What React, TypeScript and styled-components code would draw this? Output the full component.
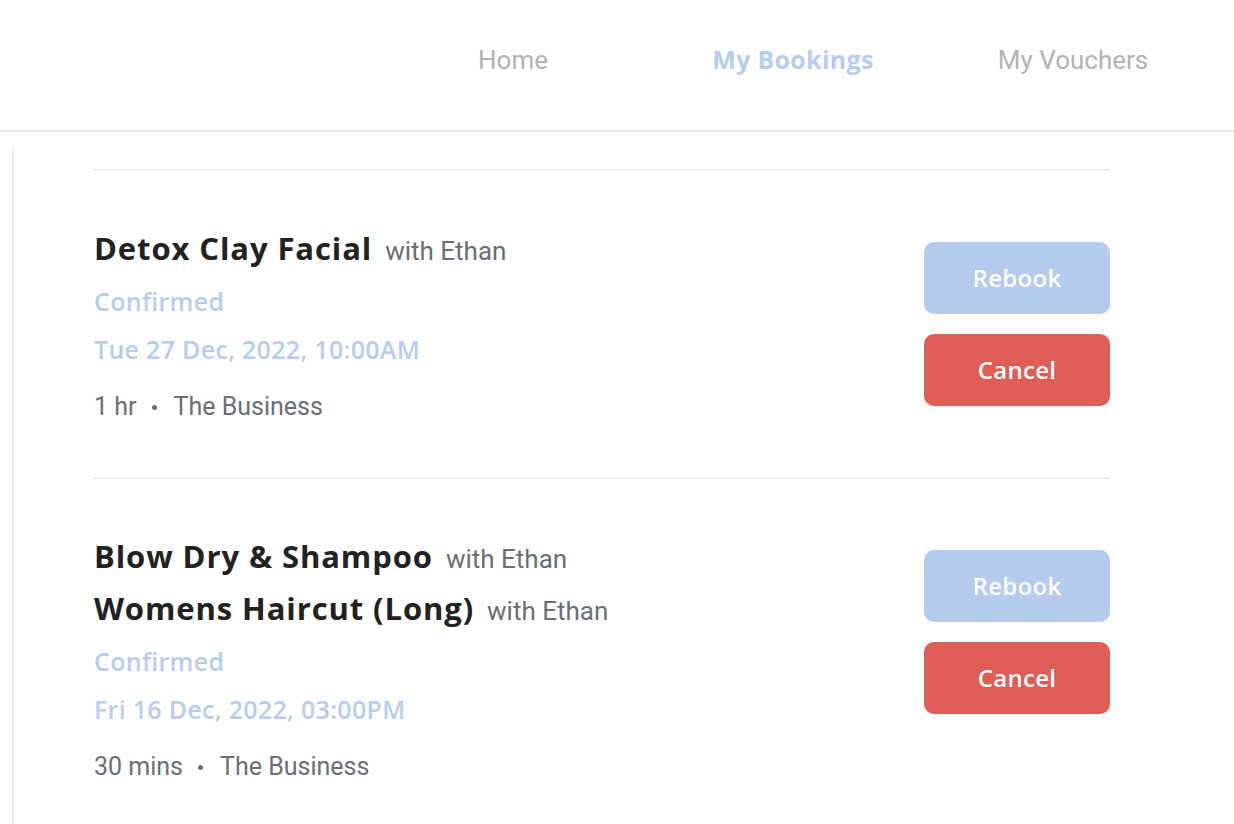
import React from 'react'
import styled, { createGlobalStyle } from 'styled-components'

const GlobalStyle = createGlobalStyle`
  html, body {
    margin: 0;
    padding: 0;
    background: #fff;
    font-family: Roboto, "Noto Sans", Arial, sans-serif;
  }
  * { box-sizing: border-box; }
`

const Header = styled.header`
  height: 132px;
  border-bottom: 2px solid #ececec;
  display: flex;
  justify-content: flex-end;
  align-items: center;
  padding-right: 21px;
`

const NavItem = styled.a<{ $active?: boolean }>`
  width: 280px;
  text-align: center;
  line-height: 40px;
  padding-bottom: ${(p) => (p.$active ? 12 : 10)}px;
  color: ${(p) => (p.$active ? '#b5cdee' : '#b3b3b3')};
  font-family: ${(p) => (p.$active ? '"Open Sans", Roboto, sans-serif' : 'inherit')};
  font-weight: ${(p) => (p.$active ? 700 : 400)};
  font-size: ${(p) => (p.$active ? '25px' : '26px')};
  letter-spacing: ${(p) => (p.$active ? '0.3px' : '0')};
  text-decoration: none;
  cursor: pointer;
`

const Body = styled.main`
  margin: 16px 0 0 12px;
  border-left: 2px solid #ececec;
  min-height: 700px;
  padding: 21px 124px 0 80px;
`

const Booking = styled.div`
  border-top: 2px solid #ececec;
  padding: 51px 0 46px;
  display: flex;
  justify-content: space-between;
`

const Info = styled.div`
  display: flex;
  flex-direction: column;
`

const TitleLine = styled.div`
  height: 52px;
  display: flex;
  align-items: baseline;
  padding-top: 6px;
  white-space: nowrap;
`

const Service = styled.span`
  font-family: "Open Sans", Roboto, sans-serif;
  font-size: 31px;
  line-height: 40px;
  font-weight: 700;
  letter-spacing: 0.9px;
  color: #222;
`

const Staff = styled.span`
  font-size: 26px;
  line-height: 40px;
  color: #6b6e75;
  margin-left: 13px;
`

const Status = styled.div<{ $gap?: number }>`
  margin-top: ${(p) => p.$gap ?? 0}px;
  height: 48px;
  font-family: "Open Sans", Roboto, sans-serif;
  font-size: 25px;
  line-height: 48px;
  font-weight: 600;
  letter-spacing: 0.3px;
  color: #b5cdee;
`

const Meta = styled.div`
  margin-top: 10px;
  height: 48px;
  display: flex;
  align-items: center;
  font-size: 25px;
  line-height: 48px;
  color: #6b6e75;
`

const Dot = styled.span`
  width: 5px;
  height: 5px;
  border-radius: 50%;
  background: #6b6e75;
  margin: 0 17px 0 15px;
`

const Actions = styled.div`
  display: flex;
  flex-direction: column;
  gap: 20px;
  padding-top: 20px;
`

const Button = styled.button<{ $kind: 'rebook' | 'cancel' }>`
  width: 186px;
  height: 72px;
  border: none;
  border-radius: 10px;
  background: ${(p) => (p.$kind === 'cancel' ? '#de5d55' : '#b5cbed')};
  color: #fff;
  font-family: "Open Sans", Roboto, sans-serif;
  font-size: 24px;
  font-weight: 600;
  letter-spacing: 0.3px;
  padding-bottom: 2px;
  cursor: pointer;
`

type Item = {
  services: string[]
  date: string
  duration: string
}

const bookings: Item[] = [
  {
    services: ['Detox Clay Facial'],
    date: 'Tue 27 Dec, 2022, 10:00AM',
    duration: '1 hr',
  },
  {
    services: ['Blow Dry & Shampoo', 'Womens Haircut (Long)'],
    date: 'Fri 16 Dec, 2022, 03:00PM',
    duration: '30 mins',
  },
]

export default function App() {
  return (
    <>
      <GlobalStyle />
      <Header>
        <NavItem>Home</NavItem>
        <NavItem $active>My Bookings</NavItem>
        <NavItem>My Vouchers</NavItem>
      </Header>
      <Body>
        {bookings.map((b, i) => (
          <Booking key={i}>
            <Info>
              {b.services.map((s) => (
                <TitleLine key={s}>
                  <Service>{s}</Service>
                  <Staff>with Ethan</Staff>
                </TitleLine>
              ))}
              <Status $gap={3}>Confirmed</Status>
              <Status>{b.date}</Status>
              <Meta>
                {b.duration}
                <Dot />
                The Business
              </Meta>
            </Info>
            <Actions>
              <Button $kind="rebook">Rebook</Button>
              <Button $kind="cancel">Cancel</Button>
            </Actions>
          </Booking>
        ))}
      </Body>
    </>
  )
}
